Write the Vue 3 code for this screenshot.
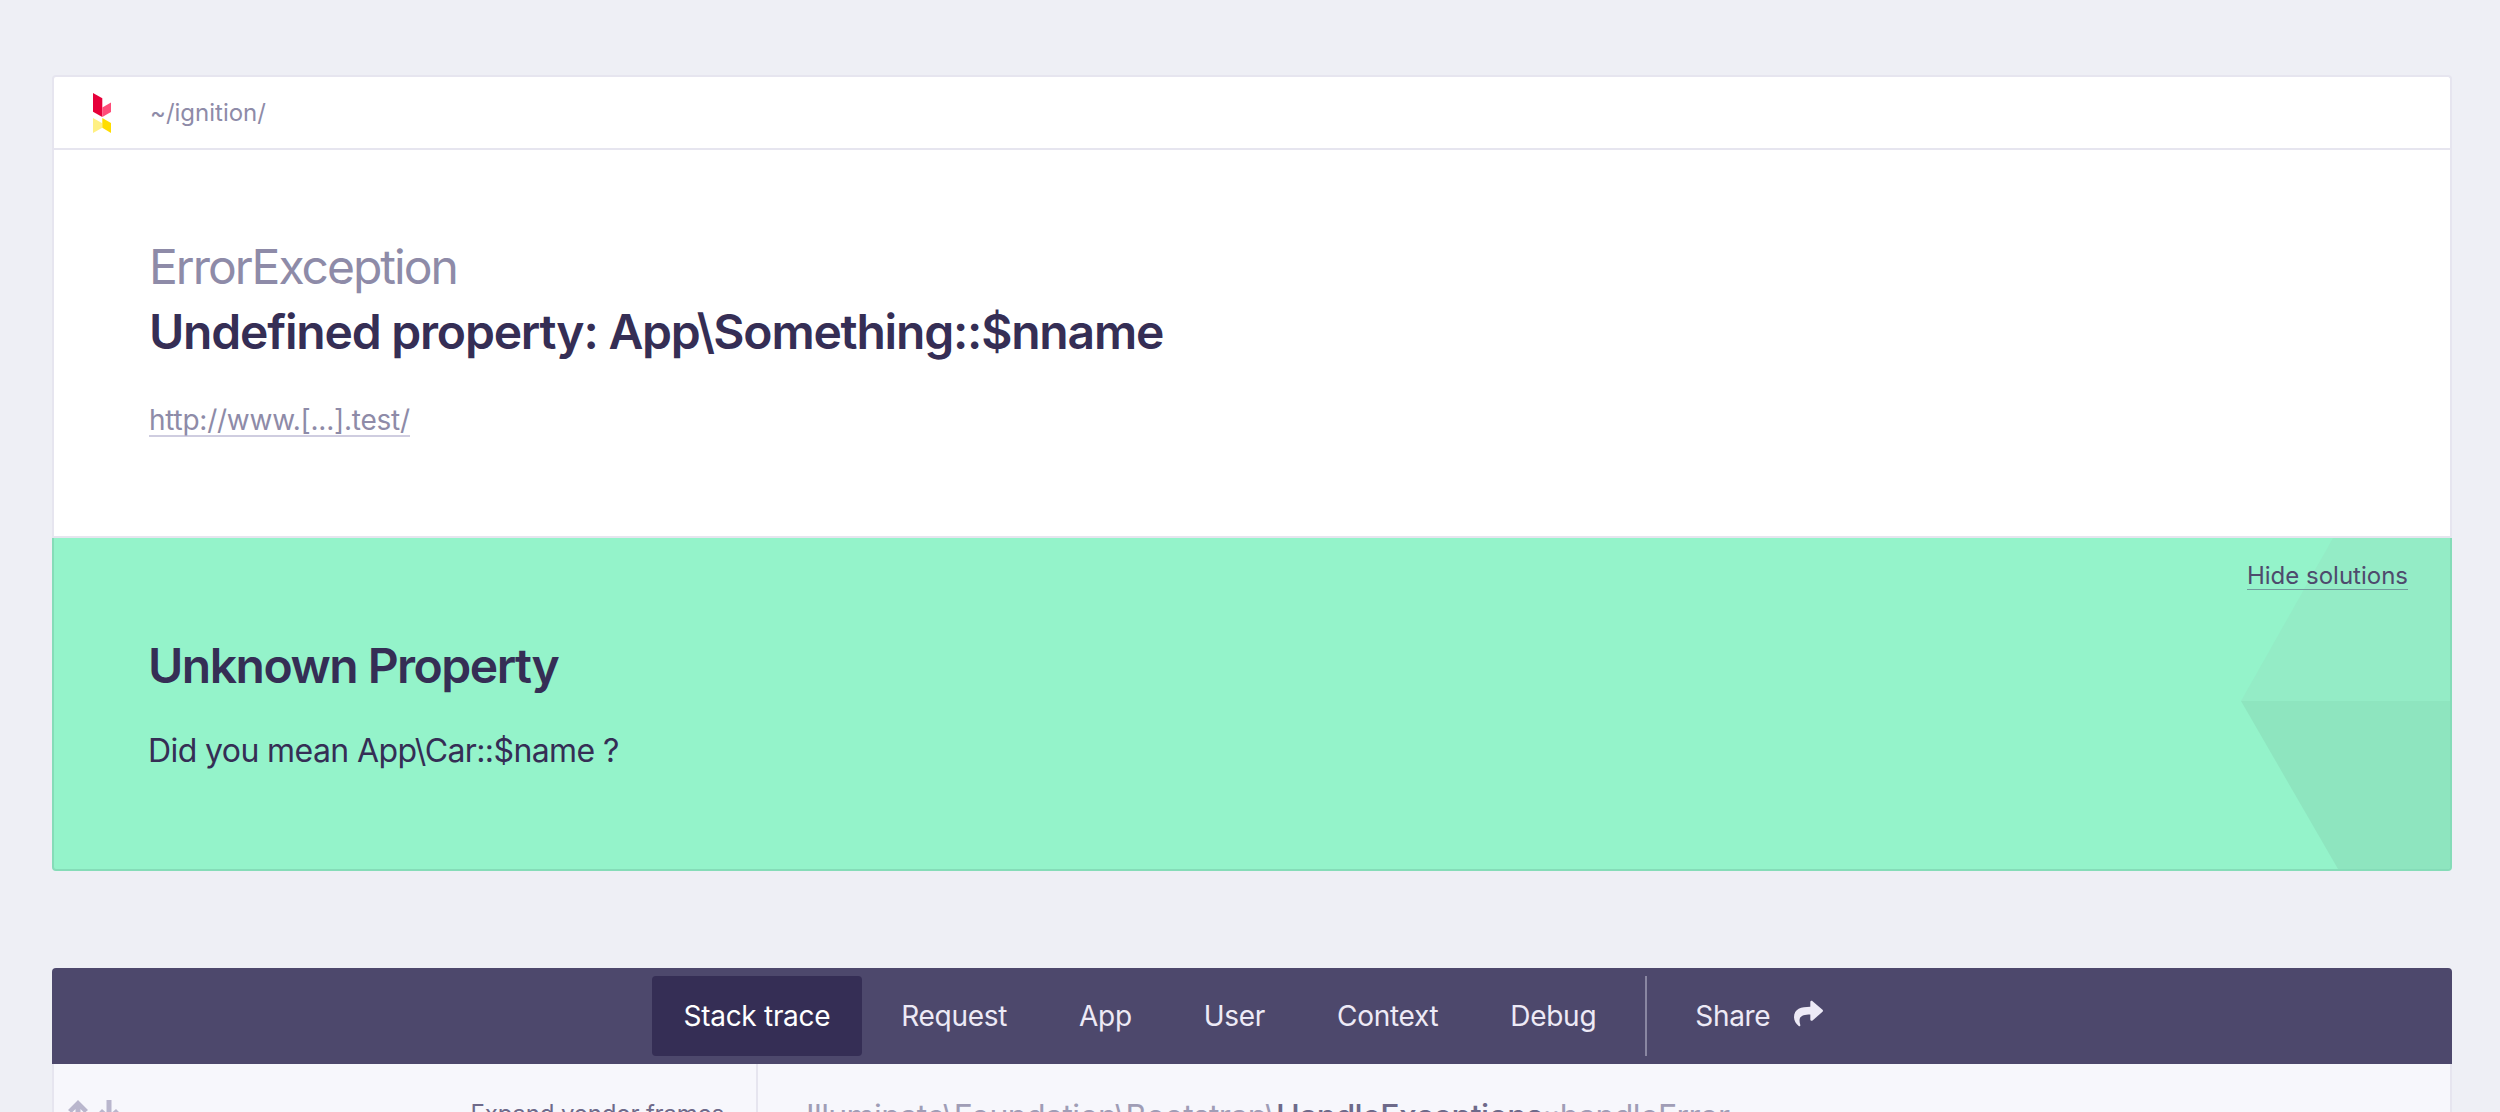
<script setup>
const tabs = ['Request', 'App', 'User', 'Context', 'Debug']
</script>

<template>
  <div class="page">
    <section class="card">
      <div class="top">
        <header class="topbar">
          <svg class="logo" viewBox="0 0 18 40" width="18" height="40">
            <polygon points="0,0 9.3,5.3 9.3,24 0,18.7" fill="#e6003a" />
            <polygon points="9.3,14.5 18,9.5 18,19 9.3,24" fill="#ff4d79" />
            <polygon points="0,25 9.3,30.3 9.3,34.7 0,40" fill="#fff082" />
            <polygon points="9.3,25 18,30 18,40 9.3,34.7" fill="#ffdd00" />
          </svg>
          <span class="path">~/ignition/</span>
        </header>
        <div class="hero">
          <div class="exception">ErrorException</div>
          <h1 class="message">Undefined property: App\Something::$nname</h1>
          <a class="url">http://www.[...].test/</a>
        </div>
      </div>
      <div class="solution">
        <svg class="shape" viewBox="0 0 209 331" width="209" height="331">
          <polygon points="0,163 92,0 209,0 209,163" fill="#94ecc6" />
          <polygon points="0,163 209,163 209,331 97,331" fill="#8ee5bf" />
        </svg>
        <a class="hide">Hide solutions</a>
        <h2 class="sol-title">Unknown Property</h2>
        <p class="sol-text">Did you mean App\Car::$name ?</p>
      </div>
    </section>

    <section class="tabs-card">
      <nav class="nav">
        <a class="tab active">Stack trace</a>
        <a v-for="t in tabs" :key="t" class="tab">{{ t }}</a>
        <span class="sep"></span>
        <a class="tab share">
          Share
          <svg class="share-icon" viewBox="0 0 512 512" width="29" height="29">
            <path fill="currentColor" d="M503.691 189.836L327.687 37.851C312.281 24.546 288 35.347 288 56.015v80.053C127.371 137.907 0 170.1 0 322.326c0 61.441 39.581 122.309 83.333 154.132 13.653 9.931 33.111-2.533 28.077-18.631C66.066 312.814 132.917 274.316 288 272.085V360c0 20.7 24.3 31.453 39.687 18.164l176.004-152c11.071-9.562 11.086-26.753 0-36.328z" />
          </svg>
        </a>
      </nav>
      <div class="body">
        <aside class="aside">
          <div class="arrows">
            <svg viewBox="0 0 20 24" width="20" height="24"><path fill="#b9b6cd" d="M10 0l10 10-3.5 3-4-4v15h-5V9l-4 4L0 10z"/></svg>
            <svg viewBox="0 0 20 24" width="20" height="24"><path fill="#b9b6cd" d="M7.5 0h5v13l4.5-4 3 3-10 12L0 12l3-3 4.5 4z"/></svg>
          </div>
          <span class="expand">Expand vendor frames</span>
        </aside>
        <div class="frame">Illuminate\Foundation\Bootstrap\<b>HandleExceptions</b>::handleError</div>
      </div>
    </section>
  </div>
</template>

<style>
html, body { margin: 0; background: #eeeff5; overflow: hidden; }
</style>

<style scoped>
.page {
  height: 1112px;
  overflow: hidden;
  padding: 75px 48px 0 52px;
  box-sizing: border-box;
  font-family: Inter, "Noto Sans", sans-serif;
  color: #352e55;
}
.top {
  background: #fff;
  border: 2px solid #e6e5ef;
  border-bottom: 0;
  border-radius: 4px 4px 0 0;
}
.topbar {
  height: 73px;
  box-sizing: border-box;
  display: flex;
  align-items: center;
  padding-left: 39px;
  border-bottom: 2px solid #e6e5ef;
}
.logo { display: block; }
.path {
  margin-left: 39px;
  font-size: 24px;
  color: #8e8ba8;
}
.hero {
  height: 388px;
  box-sizing: border-box;
  padding: 87px 95px 0;
  border-bottom: 2px solid #e6e5ef;
}
.exception {
  font-size: 48px;
  font-weight: 400;
  letter-spacing: -2px;
  line-height: 60px;
  color: #8e8ba8;
}
.message {
  margin: 5px 0 0;
  font-size: 48px;
  font-weight: 600;
  letter-spacing: -1.2px;
  line-height: 60px;
  color: #352e55;
}
.url {
  display: inline-block;
  margin-top: 43px;
  font-size: 28px;
  letter-spacing: -0.25px;
  line-height: 30px;
  color: #8e8ba8;
  border-bottom: 2px solid #cfcde0;
}
.solution {
  position: relative;
  height: 333px;
  box-sizing: border-box;
  padding: 97px 94px 0;
  background: #94f3ca;
  border: 2px solid #85dcb8;
  border-top: 0;
  border-radius: 0 0 4px 4px;
  overflow: hidden;
}
.shape { position: absolute; top: 0; right: 0; }
.hide {
  position: absolute;
  top: 24px;
  right: 42px;
  font-size: 24px;
  line-height: 27px;
  color: #4e4a6d;
  border-bottom: 1px solid #6f9c9c;
}
.sol-title {
  position: relative;
  margin: 0;
  font-size: 48px;
  font-weight: 600;
  letter-spacing: -1.5px;
  line-height: 62px;
}
.sol-text {
  position: relative;
  margin: 32px 0 0;
  font-size: 32px;
  letter-spacing: -0.6px;
  line-height: 44px;
}
.tabs-card {
  margin-top: 97px;
  border-radius: 4px 4px 0 0;
  overflow: hidden;
}
.nav {
  height: 96px;
  box-sizing: border-box;
  padding: 8px 0 8px 4px;
  background: #4d486c;
  display: flex;
  justify-content: center;
  align-items: stretch;
  gap: 6px;
  color: #edeaf6;
  font-size: 28px;
  letter-spacing: -0.3px;
}
.tab {
  display: flex;
  align-items: center;
  padding: 0 33px;
  border-radius: 4px;
}
.tab.active { padding: 0 32px; background: #352e55; color: #fff; }
.sep { width: 2px; margin: 0 9px 0 10px; background: #8a87a2; }
.share-icon { margin-left: 24px; margin-bottom: 6px; }
.body {
  display: flex;
  height: 200px;
  background: #f7f7fc;
  border-left: 2px solid #e6e5ef;
  border-right: 2px solid #e6e5ef;
}
.aside {
  width: 704px;
  box-sizing: border-box;
  border-right: 2px solid #e6e5ef;
  display: flex;
  justify-content: space-between;
  padding: 36px 32px 0 14px;
}
.arrows { display: flex; gap: 11px; align-items: flex-start; }
.expand { margin-top: -1px; font-size: 24px; letter-spacing: -0.16px; line-height: 30px; color: #6e6a8a; }
.frame {
  padding: 38px 48px 0;
  font-size: 32px;
  letter-spacing: -0.6px;
  line-height: 30px;
  color: #a09db6;
}
.frame b { font-weight: 500; color: #6e6a8a; }
</style>
